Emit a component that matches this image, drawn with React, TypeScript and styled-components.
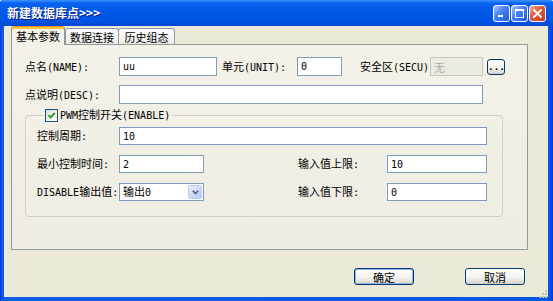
import React from "react";
import styled, { createGlobalStyle } from "styled-components";

const GlobalStyle = createGlobalStyle`
  html, body {
    margin: 0;
    padding: 0;
    background: #ffffff;
  }
  body {
    font-family: "Noto Sans CJK SC", "Liberation Sans", sans-serif;
    font-size: 11px;
    line-height: 14px;
    color: #000;
  }
  * {
    box-sizing: border-box;
  }
`;

// SimSun draws latin at half width, so latin runs get a narrow mono font
const isAscii = (s: string) => /^[\x20-\x7e]+$/.test(s);

const mixed = (text: string) =>
  text
    .split(/([\x20-\x7e]+)/)
    .filter(Boolean)
    .map((part, i) =>
      isAscii(part) ? <Ascii key={i}>{part}</Ascii> : <React.Fragment key={i}>{part}</React.Fragment>
    );

const App = () => {
  return (
    <>
      <GlobalStyle />
      <Window>
        <TitleBar>
          <Title>新建数据库点&gt;&gt;&gt;</Title>
          <WinButtons>
            <WinButton>
              <svg width="9" height="9" viewBox="0 0 9 9">
                <rect x="1" y="6" width="5" height="2" fill="#fff" />
              </svg>
            </WinButton>
            <WinButton>
              <svg width="9" height="9" viewBox="0 0 9 9">
                <rect x="0.5" y="0.5" width="8" height="8" fill="none" stroke="#fff" />
                <rect x="0" y="0" width="9" height="2" fill="#fff" />
              </svg>
            </WinButton>
            <WinButton $close>
              <svg width="9" height="9" viewBox="0 0 9 9">
                <path d="M1 1 L8 8 M8 1 L1 8" stroke="#fff" strokeWidth="1.8" strokeLinecap="round" />
              </svg>
            </WinButton>
          </WinButtons>
        </TitleBar>

        <Client>
          <TabStrip>
            <Tab $active $w={54}>基本参数</Tab>
            <Tab $w={54}>数据连接</Tab>
            <Tab $w={57} $ml={-1}>历史组态</Tab>
          </TabStrip>

          <Panel>
            <FieldRow $h={19}>
              <Label $w={94}>{mixed("点名(NAME):")}</Label>
              <TextBox $w={98} defaultValue="uu" readOnly />
              <Label $w={75} $ml={5}>{mixed("单元(UNIT):")}</Label>
              <TextBox $w={45} defaultValue="0" readOnly />
              <Label $w={70} $ml={18}>{mixed("安全区(SECU)")}</Label>
              <TextBox $w={53} $off defaultValue="无" readOnly />
              <DotsButton>...</DotsButton>
            </FieldRow>

            <FieldRow $h={19} $mt={9}>
              <Label $w={94}>{mixed("点说明(DESC):")}</Label>
              <TextBox $w={364} readOnly />
            </FieldRow>

            <Group>
              <Legend>
                <CheckBox>
                  <svg width="11" height="11" viewBox="0 0 11 11">
                    <path d="M2.5 5.2 L4.6 7.4 L8.8 3" fill="none" stroke="#21A121" strokeWidth="1.9" />
                  </svg>
                </CheckBox>
                <LegendText>{mixed("PWM控制开关(ENABLE)")}</LegendText>
              </Legend>

              <FieldRow $h={18}>
                <Label $w={82}>{mixed("控制周期:")}</Label>
                <TextBox $w={368} defaultValue="10" readOnly />
              </FieldRow>

              <FieldRow $h={18} $mt={10}>
                <Label $w={82}>{mixed("最小控制时间:")}</Label>
                <TextBox $w={85} defaultValue="2" readOnly />
                <Label $w={89} $ml={94}>{mixed("输入值上限:")}</Label>
                <TextBox $w={100} defaultValue="10" readOnly />
              </FieldRow>

              <FieldRow $h={18} $mt={10}>
                <Label $w={82}>{mixed("DISABLE输出值:")}</Label>
                <Combo>
                  <ComboText>{mixed("输出0")}</ComboText>
                  <DropButton>
                    <svg width="7" height="5" viewBox="0 0 7 5">
                      <path d="M0.8 0.8 L3.5 3.6 L6.2 0.8" fill="none" stroke="#4D6185" strokeWidth="1.6" />
                    </svg>
                  </DropButton>
                </Combo>
                <Label $w={89} $ml={94}>{mixed("输入值下限:")}</Label>
                <TextBox $w={100} defaultValue="0" readOnly />
              </FieldRow>
            </Group>
          </Panel>

          <ButtonRow>
            <PushButton $default>确定</PushButton>
            <PushButton>取消</PushButton>
          </ButtonRow>

          <Grip>
            <svg width="10" height="10" viewBox="0 0 10 10">
              <g fill="#C3BFAE">
                <rect x="7" y="1" width="2" height="2" />
                <rect x="4" y="4" width="2" height="2" />
                <rect x="7" y="4" width="2" height="2" />
                <rect x="1" y="7" width="2" height="2" />
                <rect x="4" y="7" width="2" height="2" />
                <rect x="7" y="7" width="2" height="2" />
              </g>
            </svg>
          </Grip>
        </Client>
      </Window>
    </>
  );
};

const Window = styled.div`
  width: 553px;
  height: 301px;
  display: flex;
  flex-direction: column;
  background: linear-gradient(to right, #0831D9 0px, #0C5CE9 2px, #0058E8 calc(100% - 3px), #0831D9 100%);
  border-radius: 3px 3px 0 0;
  overflow: hidden;
`;

const TitleBar = styled.div`
  height: 26px;
  flex-shrink: 0;
  display: flex;
  align-items: center;
  padding: 0 7px 0 7px;
  background: linear-gradient(
    to bottom,
    #3D95FF 0%,
    #0A63EE 12%,
    #0058E8 45%,
    #0055E4 80%,
    #0048D0 100%
  );
`;

const Title = styled.span`
  color: #fff;
  font-weight: bold;
  font-size: 12px;
  text-shadow: 1px 1px 0 #0A1883;
`;

const WinButtons = styled.div`
  display: flex;
  gap: 1px;
  margin-left: auto;
`;

const WinButton = styled.div<{ $close?: boolean }>`
  width: 17px;
  height: 17px;
  border: 1px solid #fff;
  border-radius: 3px;
  display: flex;
  align-items: center;
  justify-content: center;
  background: ${(p) =>
    p.$close
      ? "linear-gradient(135deg, #F4B29A 0%, #E2603F 40%, #C7391B 100%)"
      : "linear-gradient(135deg, #A9C6FD 0%, #4B86F3 40%, #2159DA 100%)"};
`;

const Client = styled.div`
  flex: 1;
  margin: 0 5px 4px 4px;
  background: #ECE9D8;
  display: flex;
  flex-direction: column;
  position: relative;
`;

const TabStrip = styled.div`
  display: flex;
  align-items: flex-end;
  height: 18px;
  padding-left: 7px;
  position: relative;
  z-index: 1;
`;

const Tab = styled.div<{ $active?: boolean; $w: number; $ml?: number }>`
  width: ${(p) => p.$w}px;
  height: ${(p) => (p.$active ? 19 : 16)}px;
  margin-bottom: ${(p) => (p.$active ? -1 : 0)}px;
  margin-left: ${(p) => p.$ml ?? 0}px;
  display: flex;
  align-items: center;
  justify-content: center;
  border: 1px solid #919B9C;
  border-bottom: none;
  border-radius: 3px 3px 0 0;
  background: ${(p) => (p.$active ? "#F3F1E8" : "linear-gradient(#FFFFFF, #ECEBE6)")};
  ${(p) => p.$active && "border-top-color: #E68B2C; box-shadow: inset 0 2px 0 #FFC83C;"}
`;

const Panel = styled.div`
  margin-left: 7px;
  width: 517px;
  height: 206px;
  flex-shrink: 0;
  border: 1px solid #919B9C;
  background: linear-gradient(#F3F1E8, #EFEDE3);
  padding: 12px 0 0 13px;
  display: flex;
  flex-direction: column;
`;

const FieldRow = styled.div<{ $h: number; $mt?: number }>`
  display: flex;
  align-items: center;
  height: ${(p) => p.$h}px;
  margin-top: ${(p) => p.$mt ?? 0}px;
`;

const Label = styled.span<{ $w: number; $ml?: number }>`
  width: ${(p) => p.$w}px;
  margin-left: ${(p) => p.$ml ?? 0}px;
  flex-shrink: 0;
  white-space: nowrap;
`;

const Ascii = styled.span`
  font-family: "DejaVu Sans Mono", monospace;
  font-size: 10px;
`;

const TextBox = styled.input<{ $w: number; $off?: boolean }>`
  width: ${(p) => p.$w}px;
  height: 100%;
  flex-shrink: 0;
  margin: 0;
  padding: 0 3px;
  border: 1px solid ${(p) => (p.$off ? "#C9C7BA" : "#7F9DB9")};
  background: ${(p) => (p.$off ? "#EBEAE3" : "#fff")};
  color: ${(p) => (p.$off ? "#ACA899" : "#000")};
  font-family: "DejaVu Sans Mono", "Noto Sans CJK SC", monospace;
  font-size: ${(p) => (p.$off ? 11 : 10)}px;
  outline: none;
`;

const DotsButton = styled.button`
  width: 18px;
  height: 16px;
  margin: 0 0 0 4px;
  padding: 0 0 3px;
  border: 1px solid #003C74;
  border-radius: 3px;
  background: linear-gradient(#FFFFFF, #F0F0EA 60%, #D8D2C6);
  display: flex;
  align-items: flex-end;
  justify-content: center;
  font-family: "Liberation Mono", monospace;
  font-size: 11px;
  font-weight: bold;
  line-height: 8px;
  letter-spacing: -1px;
  color: #000;
`;

const Group = styled.fieldset`
  width: 478px;
  margin: 4px 0 0;
  padding: 5px 0 15px 11px;
  border: 1px solid #D0D0BF;
  border-radius: 4px;
`;

const Legend = styled.legend`
  display: flex;
  align-items: center;
  height: 14px;
  margin-left: 6px;
  padding: 0 2px;
`;

const CheckBox = styled.span`
  width: 13px;
  height: 13px;
  border: 1px solid #1C5180;
  background: linear-gradient(135deg, #DCDCD7, #FFFFFF);
  display: flex;
  align-items: center;
  justify-content: center;
`;

const LegendText = styled.span`
  margin-left: 2px;
  white-space: nowrap;
`;

const Combo = styled.div`
  width: 85px;
  height: 100%;
  flex-shrink: 0;
  border: 1px solid #7F9DB9;
  background: #fff;
  display: flex;
  align-items: center;
  padding: 1px;
`;

const ComboText = styled.span`
  flex: 1;
  padding-left: 2px;
  white-space: nowrap;
`;

const DropButton = styled.span`
  width: 14px;
  height: 100%;
  border: 1px solid #B9CDF6;
  border-radius: 2px;
  background: linear-gradient(135deg, #E6EEFE, #B7CAF5);
  display: flex;
  align-items: center;
  justify-content: center;
`;

const ButtonRow = styled.div`
  flex: 1;
  display: flex;
  justify-content: flex-end;
  align-items: flex-end;
  gap: 51px;
  padding: 0 23px 12px 0;
`;

const PushButton = styled.button<{ $default?: boolean }>`
  width: 60px;
  height: 17px;
  margin: 0;
  padding: 0;
  border: 1px solid #003C74;
  border-radius: 3px;
  background: linear-gradient(#FFFFFF, #F3F3EF 55%, #D9D4C9);
  box-shadow: ${(p) => (p.$default ? "inset 0 0 0 1px #8FB4EC" : "inset 0 -1px 0 #D6D0C5")};
  font-family: "Noto Sans CJK SC", sans-serif;
  font-size: 11px;
  line-height: 14px;
  color: #000;
`;

const Grip = styled.div`
  position: absolute;
  right: 0;
  bottom: 0;
  width: 10px;
  height: 10px;
`;

export default App;
